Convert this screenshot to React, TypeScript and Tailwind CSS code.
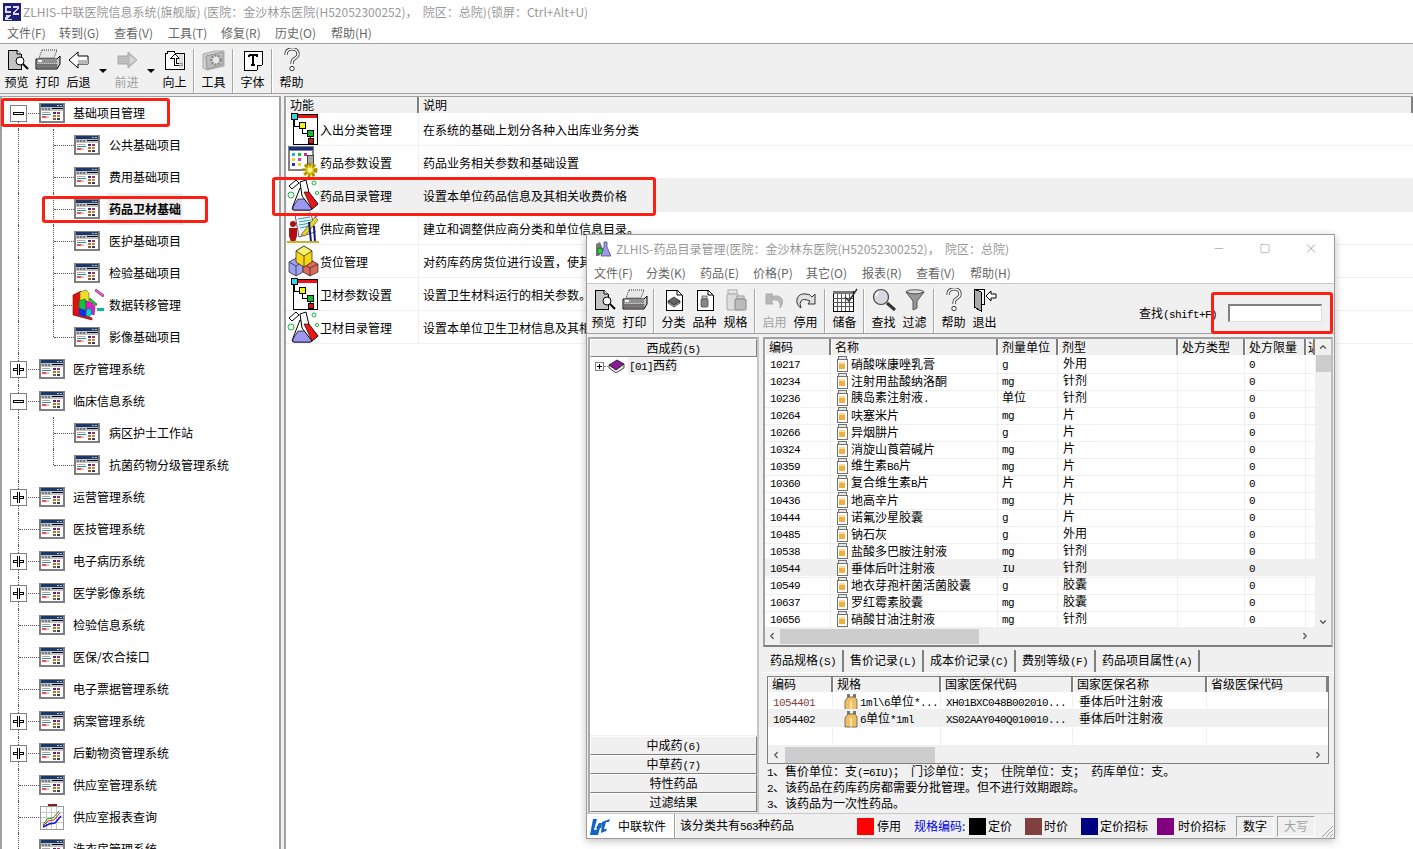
import { ChevronDown, ChevronLeft, ChevronRight, ChevronUp, Minus, Square, X } from "lucide-react";

type Ico = { className?: string };

// ---- drawn icons ----
function WinIcon() {
  return (
    <svg width="26" height="20" viewBox="0 0 26 20" shapeRendering="crispEdges" className="shrink-0">
      <rect width="26" height="20" fill="#808080" />
      <rect x="2" y="1" width="22" height="3" fill="#17396e" />
      <rect x="18" y="2" width="2" height="1" fill="#c0c0c0" />
      <rect x="21" y="2" width="2" height="1" fill="#c0c0c0" />
      <rect x="2" y="4" width="22" height="4" fill="#c0c0c0" />
      <rect x="3" y="5" width="2" height="2" fill="#777" />
      <rect x="6" y="5" width="2" height="2" fill="#777" />
      <rect x="9" y="5" width="2" height="2" fill="#777" />
      <rect x="13" y="5" width="11" height="1" fill="#000" />
      <rect x="2" y="8" width="22" height="10" fill="#fff" />
      <rect x="3" y="9" width="8" height="1" fill="#aaa" />
      <rect x="3" y="11" width="9" height="1" fill="#1b9aa8" />
      <rect x="3" y="13" width="4" height="2" fill="#f05050" />
      <rect x="7" y="13" width="3" height="2" fill="#f8b0b0" />
      <rect x="14" y="9" width="3" height="2" fill="#3b2d78" />
      <rect x="18" y="9" width="3" height="2" fill="#a03060" />
      <rect x="14" y="12" width="3" height="2" fill="#c07020" />
      <rect x="18" y="12" width="3" height="2" fill="#d08030" />
      <rect x="14" y="15" width="3" height="2" fill="#8a5a30" />
      <rect x="18" y="15" width="3" height="2" fill="#2c3a78" />
    </svg>
  );
}

function ChartIcon() {
  return (
    <svg width="26" height="26" viewBox="0 0 26 26" shapeRendering="crispEdges" className="shrink-0">
      <rect x="9" y="0" width="9" height="2" fill="#802020" />
      <rect x="1" y="2" width="24" height="24" fill="#9a9a9a" />
      <rect x="2" y="3" width="22" height="22" fill="#fff" />
      <path d="M2 8H24M2 13H24M2 18H24M7 3V25M12 3V25M17 3V25" stroke="#c8c8c8" fill="none" />
      <path d="M4 22L9 17L15 16L21 9" stroke="#e02020" fill="none" shapeRendering="auto" />
      <path d="M4 21L8 15L14 14L20 7" stroke="#10a010" fill="none" shapeRendering="auto" />
      <path d="M4 23L10 20L16 19L22 12" stroke="#1010e0" strokeWidth="1.4" fill="none" shapeRendering="auto" />
    </svg>
  );
}

function DataIcon() {
  return (
    <svg width="32" height="32" viewBox="0 0 32 32" className="-ml-[2px] -mr-[4px] shrink-0">
      <path d="M1 6L9 2L9 24L20 29L20 31L1 26Z" fill="#e01010" stroke="#700" strokeWidth=".6" />
      <path d="M8 3L14 1L17 4L17 14L8 12Z" fill="#ece020" stroke="#555" strokeWidth=".6" />
      <path d="M7 12L13 10L15 14L15 22L7 20Z" fill="#10c040" stroke="#060" strokeWidth=".6" />
      <path d="M14 12L20 14L23 18L22 26L14 22Z" fill="#e020c0" stroke="#606" strokeWidth=".6" />
      <path d="M7 19L14 21L14 28L7 26Z" fill="#1030e0" />
      <path d="M14 21L19 19L20 25L16 28L14 26Z" fill="#10c8d8" stroke="#066" strokeWidth=".6" />
      <path d="M24 0L32 6L31 8L23 2Z" fill="#e060d0" stroke="#404" strokeWidth=".5" />
      <path d="M18 9L25 15L24 17L17 11Z" fill="#30c040" stroke="#040" strokeWidth=".5" />
      <rect x="25" y="19" width="7" height="3" fill="#10b0b0" />
    </svg>
  );
}

function DocTreeIcon() {
  return (
    <svg width="32" height="32" viewBox="0 0 32 32" shapeRendering="crispEdges" className="shrink-0">
      <rect x="6" y="1" width="24" height="30" fill="#fff" stroke="#000" />
      <rect x="7" y="2" width="23" height="3" fill="#f01010" />
      <rect x="4" y="0" width="6" height="6" fill="#30d8e8" stroke="#000" />
      <path d="M7 6V13H12M15 15V20H20M23 25V22" stroke="#000" fill="none" />
      <rect x="12" y="9" width="6" height="6" fill="#f0f020" stroke="#000" />
      <rect x="20" y="17" width="6" height="6" fill="#10c030" stroke="#000" />
      <rect x="21" y="25" width="5" height="5" fill="#e01010" stroke="#000" />
    </svg>
  );
}

function ParamIcon() {
  return (
    <svg width="32" height="32" viewBox="0 0 32 32" className="shrink-0">
      <g shapeRendering="crispEdges">
        <rect x="1" y="0" width="26" height="25" fill="#808080" />
        <rect x="2" y="1" width="24" height="3" fill="#1a2a80" />
        <rect x="3" y="5" width="22" height="18" fill="#fff" />
        <rect x="5" y="7" width="3" height="3" fill="#18b8c8" />
        <rect x="11" y="7" width="3" height="3" fill="#10c040" />
        <rect x="17" y="7" width="3" height="3" fill="#e020a0" />
        <rect x="5" y="12" width="3" height="3" fill="#e8d820" />
        <rect x="11" y="12" width="3" height="3" fill="#d040c0" />
        <rect x="5" y="17" width="3" height="3" fill="#2030c0" />
        <rect x="11" y="17" width="3" height="3" fill="#e8d820" />
        <rect x="20" y="9" width="6" height="12" fill="#aaa" stroke="#444" />
      </g>
      <circle cx="23" cy="24" r="5.5" fill="#e8d020" stroke="#b09000" strokeWidth="4" strokeDasharray="2.4 1.6" />
      <circle cx="23" cy="24" r="2.4" fill="#f8f0a0" />
    </svg>
  );
}

function FlaskIcon() {
  return (
    <svg width="32" height="32" viewBox="0 0 32 32" className="shrink-0">
      <rect width="32" height="32" fill="#fff" />
      <path d="M13 9L17 13L25 28Q26 31 23 31H7Q4 31 6 27Z" fill="#fff" stroke="#000" />
      <path d="M11 20L20 20L25 29Q25 31 23 31H7Q5 31 6 28Z" fill="#9c98f0" stroke="#000" strokeWidth=".7" />
      <path d="M2 7L9 1L12 4L5 10Z" fill="#fff" stroke="#000" />
      <path d="M13 3L19 1L22 14L31 25L25 30L15 17Z" fill="#fff" stroke="#000" />
      <path d="M17 13L22 13L31 25L25 30Z" fill="#e81818" stroke="#000" strokeWidth=".6" />
      <circle cx="27" cy="4" r="2" fill="none" stroke="#10c030" />
      <circle cx="30" cy="14" r="1.6" fill="none" stroke="#10c030" />
      <circle cx="4" cy="16" r="3" fill="none" stroke="#10c030" />
    </svg>
  );
}

function SupplierIcon() {
  return (
    <svg width="32" height="32" viewBox="0 0 32 32" className="shrink-0">
      <path d="M8 3L24 1L28 20L12 25Z" fill="#eef4ff" stroke="#334" strokeWidth=".8" />
      <path d="M11 7L23 5M12 10L24 8M12 13L24 11M13 16L22 14" stroke="#30a0a0" />
      <circle cx="6" cy="12" r="3" fill="#b01010" />
      <path d="M2 16H10L10 24L8 30H4L2 24Z" fill="#b01010" />
      <path d="M14 23L28 5L31 8L18 24Z" fill="#e8d820" stroke="#333" strokeWidth=".6" />
      <circle cx="29" cy="3" r="2" fill="#d020c0" />
      <path d="M22 10L24 30M27 14L28 30" stroke="#101880" strokeWidth="2" />
      <rect x="0" y="29" width="32" height="2" fill="#c8b030" />
    </svg>
  );
}

function CubesIcon() {
  return (
    <svg width="32" height="32" viewBox="0 0 32 32" className="shrink-0">
      <path d="M2 17L9 13L16 17V27L9 31L2 27Z" fill="#9fa0f0" stroke="#222" strokeWidth=".7" />
      <path d="M9 21V31M2 17L9 21L16 17" stroke="#222" strokeWidth=".7" fill="none" />
      <path d="M16 19L24 15L31 19V27L23 31L16 27Z" fill="#e06858" stroke="#222" strokeWidth=".7" />
      <path d="M23 23V31M16 19L23 23L31 19" stroke="#222" strokeWidth=".7" fill="none" />
      <path d="M9 6L17 1L25 6V17L17 22L9 17Z" fill="#f8d818" stroke="#222" strokeWidth=".7" />
      <path d="M17 11V22" stroke="#222" strokeWidth=".7" />
      <path d="M9 6L17 11L25 6L17 1Z" fill="#f8f070" stroke="#222" strokeWidth=".7" />
    </svg>
  );
}

function BottleIcon() {
  return (
    <svg width="12" height="16" viewBox="0 0 12 16" shapeRendering="crispEdges" className="shrink-0">
      <rect x="2" y="0" width="8" height="3" fill="#e8e8e8" stroke="#707070" />
      <rect x="1" y="3" width="10" height="12" fill="#fff" stroke="#707070" />
      <rect x="3" y="6" width="6" height="7" fill="#f0b040" />
      <rect x="3" y="6" width="6" height="2" fill="#f8dc98" />
    </svg>
  );
}

function BottleOpenIcon() {
  return (
    <svg width="14" height="17" viewBox="0 0 14 17" className="shrink-0">
      <path d="M3 0H6V3H3ZM9 0H12V3H9Z" fill="#777" />
      <path d="M1 7L4 3H11L13 6V16H1Z" fill="#f0c060" stroke="#555" strokeWidth=".8" />
      <path d="M7 7V16" stroke="#fff" />
    </svg>
  );
}

function PreviewIcon() {
  return (
    <svg width="24" height="22" viewBox="0 0 24 22">
      <path d="M3 1H12L16 5V20H3Z" fill="#c4c4c4" stroke="#000" shapeRendering="crispEdges" />
      <path d="M12 1V5H16" fill="#fff" stroke="#000" />
      <circle cx="15" cy="12" r="4" fill="#fff" stroke="#000" />
      <path d="M18 15L23 20" stroke="#000" strokeWidth="2" />
    </svg>
  );
}

function PrintIcon() {
  return (
    <svg width="26" height="22" viewBox="0 0 26 22">
      <path d="M7 1H22L19 9H4Z" fill="#e8e8e8" stroke="#333" strokeDasharray="1 1" />
      <path d="M1 10H22L25 7V15L22 20H1Z" fill="#c8c8c8" stroke="#000" />
      <rect x="2" y="10" width="20" height="4" fill="#909090" />
      <rect x="2" y="15" width="20" height="4" fill="#777" stroke="#555" strokeWidth=".6" strokeDasharray="1 1" />
      <rect x="3" y="11" width="4" height="2" fill="#fff" />
    </svg>
  );
}

function BackIcon({ gray }: { gray?: boolean }) {
  return (
    <svg width="22" height="18" viewBox="0 0 22 18">
      <path d="M1 9L10 1V5H20V13H10V17Z" fill={gray ? "#c8c8c8" : "#fff"} stroke={gray ? "#a8a8a8" : "#000"} />
      <path d="M10 13V9H20V13Z" fill="#b8b8b8" />
    </svg>
  );
}

function ForwardIcon() {
  return (
    <svg width="22" height="18" viewBox="0 0 22 18">
      <path d="M21 9L12 1V5H2V13H12V17Z" fill="#bdbdbd" stroke="#a8a8a8" />
      <path d="M2 9H14V5L20 9L14 13V9Z" fill="#d8d8d8" />
    </svg>
  );
}

function UpFolderIcon() {
  return (
    <svg width="22" height="20" viewBox="0 0 22 20" shapeRendering="crispEdges">
      <path d="M3 1H10L11 3H20V19H1V3H3Z" fill="#fff" stroke="#000" />
      <path d="M10 15V8H7L11 4L15 8H12V13H18V15Z" fill="#fff" stroke="#000" />
      <rect x="15" y="4" width="4" height="14" fill="#d0d0d0" opacity=".7" />
    </svg>
  );
}

function ToolsIcon() {
  return (
    <svg width="24" height="22" viewBox="0 0 24 22">
      <path d="M1 5L13 2H22V17L5 21L1 19Z" fill="#d0d0d0" stroke="#aaa" />
      <path d="M4 7L21 3V16L5 20Z" fill="#bbb" stroke="#999" />
      <circle cx="14" cy="11" r="4.5" fill="#e8e8e8" stroke="#888" strokeWidth="2.4" strokeDasharray="2 1.2" />
    </svg>
  );
}

function FontIcon() {
  return (
    <svg width="20" height="21" viewBox="0 0 20 21" shapeRendering="crispEdges">
      <path d="M1 1H19V15L14 20H1Z" fill="#fff" stroke="#000" />
      <path d="M14 20V15H19" fill="#ddd" stroke="#000" />
      <path d="M6 5H14V7M10 5V15M8 15H12M6 5V7" stroke="#000" strokeWidth="1.4" fill="none" />
    </svg>
  );
}

function HelpIcon() {
  return (
    <svg width="16" height="24" viewBox="0 0 16 24">
      <path d="M2 7Q2 1 8 1Q14 1 14 6Q14 9 10 11Q8 12 8 16" fill="none" stroke="#333" strokeWidth="3.2" />
      <path d="M2 7Q2 1 8 1Q14 1 14 6Q14 9 10 11Q8 12 8 16" fill="none" stroke="#fff" strokeWidth="1.6" />
      <circle cx="8" cy="20.5" r="2.2" fill="#fff" stroke="#333" />
    </svg>
  );
}

function CategoryIcon() {
  return (
    <svg width="20" height="22" viewBox="0 0 20 22">
      <path d="M2 1H13L18 6V21H2Z" fill="#fff" stroke="#000" shapeRendering="crispEdges" />
      <path d="M13 1V6H18" fill="none" stroke="#000" />
      <path d="M4 12L10 8L16 12L10 16Z" fill="#666" stroke="#000" strokeWidth=".6" />
      <path d="M4 12V14L10 18L16 14V12L10 16Z" fill="#aaa" stroke="#000" strokeWidth=".6" />
    </svg>
  );
}

function VarietyIcon() {
  return (
    <svg width="20" height="22" viewBox="0 0 20 22">
      <path d="M2 1H13L18 6V21H2Z" fill="#fff" stroke="#000" shapeRendering="crispEdges" />
      <path d="M13 1V6H18" fill="none" stroke="#000" />
      <rect x="7" y="7" width="5" height="3" fill="#ccc" stroke="#444" strokeWidth=".7" />
      <rect x="6" y="10" width="7" height="8" rx="1" fill="#888" stroke="#444" strokeWidth=".7" />
    </svg>
  );
}

function SpecIcon() {
  return (
    <svg width="22" height="22" viewBox="0 0 22 22">
      <rect x="3" y="1" width="9" height="4" fill="#e8e8e8" stroke="#aaa" />
      <rect x="2" y="5" width="11" height="16" rx="1" fill="#dcdcdc" stroke="#aaa" />
      <rect x="12" y="7" width="7" height="3" fill="#d8d8d8" stroke="#999" />
      <rect x="10" y="10" width="11" height="11" rx="1" fill="#bbb" stroke="#888" />
    </svg>
  );
}

function UndoIcon() {
  return (
    <svg width="22" height="18" viewBox="0 0 22 18">
      <path d="M2 3L9 3L7 6Q15 3 18 8Q20 12 16 17Q17 11 13 9Q10 8 7 10L9 13L2 13Z" fill="#b8b8b8" stroke="#aaa" />
    </svg>
  );
}

function RedoIcon() {
  return (
    <svg width="22" height="18" viewBox="0 0 22 18">
      <path d="M20 13L13 13L15 10Q8 7 6 10Q4 12 6 17Q1 14 2 8Q4 2 11 3Q15 3 17 6L20 3Z" fill="#e0e0e0" stroke="#333" />
    </svg>
  );
}

function StockIcon() {
  return (
    <svg width="26" height="24" viewBox="0 0 26 24" shapeRendering="crispEdges">
      <rect x="1" y="3" width="20" height="20" fill="#fff" stroke="#000" />
      <rect x="1" y="3" width="20" height="3" fill="#777" />
      <path d="M5 6V23M9 6V23M13 6V23M17 6V23M1 10H21M1 14H21M1 18H21" stroke="#555" fill="none" />
      <path d="M13 9L17 13L25 1" stroke="#333" strokeWidth="1.5" fill="none" shapeRendering="auto" />
    </svg>
  );
}

function SearchIcon() {
  return (
    <svg width="24" height="24" viewBox="0 0 24 24">
      <circle cx="9" cy="9" r="7.5" fill="#d8d8e0" stroke="#444" strokeWidth="1.2" />
      <path d="M7 4Q4 5 4 8" stroke="#fff" strokeWidth="1.5" fill="none" />
      <path d="M15 15L23 22" stroke="#333" strokeWidth="3" />
    </svg>
  );
}

function FunnelIcon() {
  return (
    <svg width="20" height="22" viewBox="0 0 20 22">
      <ellipse cx="10" cy="3" rx="9" ry="2.2" fill="#ddd" stroke="#555" />
      <path d="M1 3L8 12V21L12 19V12L19 3Q10 7 1 3Z" fill="#999" stroke="#555" />
    </svg>
  );
}

function ExitIcon() {
  return (
    <svg width="24" height="24" viewBox="0 0 24 24" shapeRendering="crispEdges">
      <path d="M1 1H11V16H8" fill="none" stroke="#000" />
      <path d="M1 1L8 4V23L1 19Z" fill="#aaa" stroke="#000" />
      <path d="M13 8L18 3V6H23V10H18V13Z" fill="#fff" stroke="#000" shapeRendering="auto" />
    </svg>
  );
}

function SmallFlask() {
  return (
    <svg width="16" height="16" viewBox="0 0 16 16" className="shrink-0">
      <path d="M1 3L5 1L8 8L4 15H1Z" fill="#777" />
      <circle cx="5" cy="10" r="3" fill="#20d040" stroke="#333" strokeWidth=".6" />
      <path d="M9 1H12V6L16 15H6L9 6Z" fill="#9c98f0" stroke="#444" strokeWidth=".7" />
    </svg>
  );
}

function BookIcon() {
  return (
    <svg width="17" height="14" viewBox="0 0 17 14" className="shrink-0">
      <path d="M1 6L9 1L16 5L8 11Z" fill="#8a1a9a" stroke="#000" strokeWidth=".7" />
      <path d="M1 6V9L8 14L16 9V5L8 11Z" fill="#e8e8e8" stroke="#000" strokeWidth=".7" />
    </svg>
  );
}

function AppLogo() {
  return (
    <svg width="18" height="18" viewBox="0 0 18 18" shapeRendering="crispEdges" className="shrink-0">
      <rect width="18" height="18" fill="#20207a" />
      <path d="M2 3H8V5H4V8H8V10H2ZM10 3H16V5L12 10H16V12H10V10L14 5H10ZM3 12H8L5 16H9V17H2Z" fill="#fff" opacity=".85" />
    </svg>
  );
}

function ZlLogo() {
  return (
    <svg width="22" height="20" viewBox="0 0 22 20" className="shrink-0">
      <path d="M4 3H8L5 14H8L7 19H1Z" fill="#1464c8" />
      <path d="M10 7H13L12 12H11L9 19H6L8 12H7Z" fill="#1464c8" />
      <path d="M13 6L21 3L20 6H17L15 13H18L17 15L12 17Z" fill="#1464c8" />
    </svg>
  );
}

// ---- shared pieces ----

// ASCII in the old grids is half-width bitmap text, so it gets its own run
function Mix({ text }: { text: string }) {
  return (
    <>
      {text.split(/([\x00-\x7f]+)/).map((part, i) =>
        /^[\x00-\x7f]+$/.test(part) ? (
          <span key={i} className="font-['Liberation_Mono'] text-[11px] tracking-[-0.6px]">
            {part}
          </span>
        ) : (
          <span key={i}>{part}</span>
        )
      )}
    </>
  );
}

function ToolBtn({ icon, label, off }: { icon: React.ReactNode; label: string; off?: boolean }) {
  return (
    <div className="flex w-[31px] shrink-0 flex-col items-center">
      <div className="flex h-[22px] items-center justify-center">{icon}</div>
      <span className={`mt-[3px] whitespace-nowrap text-[12px] leading-[16px] ${off ? "text-[#a0a0a0]" : "text-black"}`}>
        {label}
      </span>
    </div>
  );
}

function Sep() {
  return <div className="mx-[3px] h-[44px] w-[2px] shrink-0 border-l border-r border-l-[#a8a8a8] border-r-white" />;
}

function Drop() {
  return (
    <div className="flex h-[38px] w-[17px] shrink-0 items-end justify-center pb-[14px]">
      <div className="h-0 w-0 border-x-[4px] border-t-[4px] border-x-transparent border-t-black" />
    </div>
  );
}

function HeadCell({ children, className = "" }: { children: React.ReactNode; className?: string }) {
  return (
    <div
      className={`truncate border-l border-r-2 border-l-white border-r-[#808080] bg-[#f0f0f0] pl-[3px] text-[12px] leading-[15px] text-black ${className}`}
    >
      {children}
    </div>
  );
}

function RaisedBtn({ label }: { label: string }) {
  return (
    <div className="h-[19px] border border-t-white border-l-white border-r-[#808080] border-b-[#808080] bg-[#f0f0f0] text-center text-[12px] leading-[15px]">
      <Mix text={label} />
    </div>
  );
}

function RedBox({ className }: Ico) {
  return <div className={`pointer-events-none absolute rounded-[3px] border-[3px] border-[#fb1f14] ${className}`} />;
}

// ---- data ----
const menus = [
  { t: "文件(F)", w: "w-[52px]" },
  { t: "转到(G)", w: "w-[55px]" },
  { t: "查看(V)", w: "w-[54px]" },
  { t: "工具(T)", w: "w-[53px]" },
  { t: "修复(R)", w: "w-[54px]" },
  { t: "历史(O)", w: "w-[56px]" },
  { t: "帮助(H)", w: "w-[50px]" },
];

const subMenus = [
  { t: "文件(F)", w: "w-[52px]" },
  { t: "分类(K)", w: "w-[54px]" },
  { t: "药品(E)", w: "w-[53px]" },
  { t: "价格(P)", w: "w-[53px]" },
  { t: "其它(O)", w: "w-[56px]" },
  { t: "报表(R)", w: "w-[54px]" },
  { t: "查看(V)", w: "w-[54px]" },
  { t: "帮助(H)", w: "w-[50px]" },
];

type TreeRow = {
  label: string;
  level: 0 | 1;
  toggle?: "plus" | "minus";
  icon?: "chart" | "data";
  selected?: boolean;
  last?: boolean;
  first?: boolean;
};

const tree: TreeRow[] = [
  { label: "基础项目管理", level: 0, toggle: "minus", first: true },
  { label: "公共基础项目", level: 1 },
  { label: "费用基础项目", level: 1 },
  { label: "药品卫材基础", level: 1, selected: true },
  { label: "医护基础项目", level: 1 },
  { label: "检验基础项目", level: 1 },
  { label: "数据转移管理", level: 1, icon: "data" },
  { label: "影像基础项目", level: 1, last: true },
  { label: "医疗管理系统", level: 0, toggle: "plus" },
  { label: "临床信息系统", level: 0, toggle: "minus" },
  { label: "病区护士工作站", level: 1 },
  { label: "抗菌药物分级管理系统", level: 1, last: true },
  { label: "运营管理系统", level: 0, toggle: "plus" },
  { label: "医技管理系统", level: 0 },
  { label: "电子病历系统", level: 0, toggle: "plus" },
  { label: "医学影像系统", level: 0, toggle: "plus" },
  { label: "检验信息系统", level: 0 },
  { label: "医保/农合接口", level: 0 },
  { label: "电子票据管理系统", level: 0 },
  { label: "病案管理系统", level: 0, toggle: "plus" },
  { label: "后勤物资管理系统", level: 0, toggle: "plus" },
  { label: "供应室管理系统", level: 0 },
  { label: "供应室报表查询", level: 0, icon: "chart" },
  { label: "洗衣房管理系统", level: 0 },
];

const funcs = [
  { icon: <DocTreeIcon />, name: "入出分类管理", desc: "在系统的基础上划分各种入出库业务分类" },
  { icon: <ParamIcon />, name: "药品参数设置", desc: "药品业务相关参数和基础设置" },
  { icon: <FlaskIcon />, name: "药品目录管理", desc: "设置本单位药品信息及其相关收费价格", active: true },
  { icon: <SupplierIcon />, name: "供应商管理", desc: "建立和调整供应商分类和单位信息目录。" },
  { icon: <CubesIcon />, name: "货位管理", desc: "对药库药房货位进行设置，使其与实际存放货位一致" },
  { icon: <DocTreeIcon />, name: "卫材参数设置", desc: "设置卫生材料运行的相关参数。" },
  { icon: <FlaskIcon />, name: "卫材目录管理", desc: "设置本单位卫生卫材信息及其相关收费价格" },
];

const drugs = [
  ["10217", "硝酸咪康唑乳膏", "g", "外用"],
  ["10234", "注射用盐酸纳洛酮", "mg", "针剂"],
  ["10236", "胰岛素注射液.", "单位", "针剂"],
  ["10264", "呋塞米片", "mg", "片"],
  ["10266", "异烟肼片", "g", "片"],
  ["10324", "消旋山莨菪碱片", "mg", "片"],
  ["10359", "维生素B6片", "mg", "片"],
  ["10360", "复合维生素B片", "片", "片"],
  ["10436", "地高辛片", "mg", "片"],
  ["10444", "诺氟沙星胶囊", "g", "片"],
  ["10485", "钠石灰", "g", "外用"],
  ["10538", "盐酸多巴胺注射液", "mg", "针剂"],
  ["10544", "垂体后叶注射液", "IU", "针剂"],
  ["10549", "地衣芽孢杆菌活菌胶囊", "g", "胶囊"],
  ["10637", "罗红霉素胶囊", "mg", "胶囊"],
  ["10656", "硝酸甘油注射液", "mg", "针剂"],
];

const tabs = [
  { t: "药品规格(S)", w: "w-[80px]", active: true },
  { t: "售价记录(L)", w: "w-[80px]" },
  { t: "成本价记录(C)", w: "w-[92px]" },
  { t: "费别等级(F)", w: "w-[80px]" },
  { t: "药品项目属性(A)", w: "w-[104px]" },
];

const gridCols = "grid grid-cols-[66px_167px_60px_120px_67px_61px_9px]";
const subCols = "grid grid-cols-[65px_108px_132px_134px_121px]";
const subHead = "!overflow-visible !leading-[14px]";

function TreeLine({ row }: { row: TreeRow }) {
  return (
    <div className={`relative flex h-8 shrink-0 items-center ${row.level === 0 ? "pl-[39px]" : "pl-[74px]"}`}>
      {/* dotted connectors */}
      <span
        className={`absolute left-[18px] w-0 border-l border-dotted border-[#555] ${row.first ? "top-[16px] bottom-0" : "top-0 bottom-0"}`}
      />
      {row.level === 1 && (
        <>
          <span className={`absolute left-[53px] top-0 w-0 border-l border-dotted border-[#555] ${row.last ? "h-[16px]" : "h-8"}`} />
          <span className="absolute left-[54px] top-[16px] h-0 w-[20px] border-t border-dotted border-[#555]" />
        </>
      )}
      {row.level === 0 && <span className="absolute left-[19px] top-[16px] h-0 w-[20px] border-t border-dotted border-[#555]" />}
      {row.toggle && (
        <span className="absolute left-[10px] top-[8px] flex h-[17px] w-[17px] items-center justify-center border border-[#808080] bg-white">
          <span className="h-[3px] w-[11px] border border-black bg-white" />
          {row.toggle === "plus" && <span className="absolute h-[11px] w-[3px] border-x border-black bg-white" />}
        </span>
      )}
      <span className="relative shrink-0 bg-white">
        {row.icon === "data" ? <DataIcon /> : row.icon === "chart" ? <ChartIcon /> : <WinIcon />}
      </span>
      <span
        className={`flex h-8 items-center whitespace-nowrap px-[2px] text-[12px] text-black ${
          row.level === 1 ? "ml-[7px]" : "ml-[6px]"
        } ${row.selected ? "bg-[#f0f0f0] font-bold" : ""}`}
      >
        {row.label}
      </span>
    </div>
  );
}

function DrugWindow() {
  return (
    <div className="absolute left-[586px] top-[234px] flex h-[605px] w-[749px] flex-col border border-[#9c9c9c] bg-[#f0f0f0] shadow-[0_2px_8px_rgba(0,0,0,0.25)]">
      {/* title */}
      <div className="flex h-[27px] shrink-0 items-center bg-white pl-[8px]">
        <SmallFlask />
        <span className="ml-[5px] whitespace-nowrap text-[12px] text-[#999]">
          ZLHIS-药品目录管理(医院：金沙林东医院(H52052300252)，&nbsp;&nbsp;院区：总院)
        </span>
        <div className="ml-auto flex items-center text-[#777]">
          <Minus className="h-[13px] w-[46px]" strokeWidth={1} />
          <Square className="h-[11px] w-[46px]" strokeWidth={1} />
          <X className="h-[15px] w-[46px]" strokeWidth={1} />
        </div>
      </div>
      {/* menu */}
      <div className="flex h-[21px] shrink-0 items-center bg-white pl-[7px]">
        {subMenus.map((m) => (
          <span key={m.t} className={`${m.w} whitespace-nowrap text-[12px] text-[#666]`}>
            {m.t}
          </span>
        ))}
      </div>
      {/* toolbar */}
      <div className="flex h-[51px] shrink-0 items-start border-y border-t-[#c8c8c8] border-b-[#a0a0a0] bg-[#f0f0f0] pl-[1px] pt-[5px]">
        <ToolBtn icon={<PreviewIcon />} label="预览" />
        <ToolBtn icon={<PrintIcon />} label="打印" />
        <Sep />
        <ToolBtn icon={<CategoryIcon />} label="分类" />
        <ToolBtn icon={<VarietyIcon />} label="品种" />
        <ToolBtn icon={<SpecIcon />} label="规格" />
        <Sep />
        <ToolBtn icon={<UndoIcon />} label="启用" off />
        <ToolBtn icon={<RedoIcon />} label="停用" />
        <Sep />
        <ToolBtn icon={<StockIcon />} label="储备" />
        <Sep />
        <ToolBtn icon={<SearchIcon />} label="查找" />
        <ToolBtn icon={<FunnelIcon />} label="过滤" />
        <Sep />
        <ToolBtn icon={<HelpIcon />} label="帮助" />
        <ToolBtn icon={<ExitIcon />} label="退出" />
        <div className="ml-auto mr-[12px] mt-[13px] flex items-center">
          <span className="mt-[2px] whitespace-nowrap text-[12px] text-black">
            <Mix text="查找(shift+F)" />
          </span>
          <div className="ml-[11px] h-[18px] w-[94px] border border-t-2 border-l-2 border-t-[#808080] border-l-[#808080] border-r-[#e0e0e0] border-b-[#e0e0e0] bg-white" />
        </div>
      </div>
      {/* body */}
      <div className="flex h-[479px] shrink-0 pt-[3px]">
        {/* left category panel */}
        <div className="ml-[1px] flex h-[476px] w-[171px] shrink-0 flex-col border-2 border-[#a8a8a8] border-b-0 border-r-[#c8c8c8]">
          <div className="h-[18px] shrink-0 border border-t-white border-l-white border-r-[#808080] border-b-[#808080] bg-[#f0f0f0] text-center text-[12px] leading-[15px]">
            <Mix text="西成药(5)" />
          </div>
          <div className="relative flex-1 bg-white">
            <div className="flex h-[18px] items-center pl-[5px]">
              <span className="relative flex h-[9px] w-[9px] items-center justify-center border border-[#808080] bg-white">
                <span className="h-px w-[5px] bg-black" />
                <span className="absolute h-[5px] w-px bg-black" />
              </span>
              <span className="w-[4px] border-t border-dotted border-[#777]" />
              <BookIcon />
              <span className="ml-[3px] whitespace-nowrap bg-[#f0f0f0] px-[1px] text-[12px] leading-[16px]">
                <Mix text="[01]西药" />
              </span>
            </div>
          </div>
          <div className="flex shrink-0 flex-col bg-[#f0f0f0] pb-[1px] pt-px">
            <RaisedBtn label="中成药(6)" />
            <RaisedBtn label="中草药(7)" />
            <RaisedBtn label="特性药品" />
            <RaisedBtn label="过滤结果" />
          </div>
        </div>
        {/* right side */}
        <div className="ml-[3px] flex w-[572px] shrink-0 flex-col">
          <div className="ml-px flex h-[310px] w-[570px] shrink-0 flex-col border-2 border-[#a0a0a0] border-r-[#bdbdbd] border-b-[#808080] bg-[#f0f0f0]">
            <div className="flex flex-1">
              <div className="w-[550px] shrink-0">
                <div className={`${gridCols} h-[16px]`}>
                  <HeadCell>编码</HeadCell>
                  <HeadCell>名称</HeadCell>
                  <HeadCell>剂量单位</HeadCell>
                  <HeadCell>剂型</HeadCell>
                  <HeadCell>处方类型</HeadCell>
                  <HeadCell>处方限量</HeadCell>
                  <HeadCell className="!pl-[1px]">近</HeadCell>
                </div>
                {drugs.map((d) => (
                  <div
                    key={d[0]}
                    className={`${gridCols} h-[17px] text-[12px] leading-[15px] ${d[0] === "10544" ? "bg-[#f0f0f0]" : "bg-white"}`}
                  >
                    <div className="border-b border-r border-[#f0f0f0] pl-[5px]">
                      <Mix text={d[0]} />
                    </div>
                    <div className="flex items-center overflow-hidden whitespace-nowrap border-b border-r border-[#f0f0f0] pl-[5px]">
                      <BottleIcon />
                      <span className="ml-[3px] -mt-px">
                        <Mix text={d[1]} />
                      </span>
                    </div>
                    <div className="border-b border-r border-[#f0f0f0] pl-[4px]">
                      <Mix text={d[2]} />
                    </div>
                    <div className="border-b border-r border-[#f0f0f0] pl-[5px] leading-[16px]">{d[3]}</div>
                    <div className="border-b border-r border-[#f0f0f0]" />
                    <div className="border-b border-r border-[#f0f0f0] pl-[4px]">
                      <Mix text="0" />
                    </div>
                    <div className="border-b border-[#f0f0f0]" />
                  </div>
                ))}
              </div>
              <div className="flex w-[16px] shrink-0 flex-col items-center bg-[#f0f0f0]">
                <ChevronUp className="my-[3px] h-[10px] w-[10px] text-[#555]" strokeWidth={3} />
                <div className="h-[17px] w-[15px] bg-[#cdcdcd]" />
                <ChevronDown className="mt-auto h-[10px] w-[10px] text-[#555]" strokeWidth={3} />
              </div>
            </div>
            <div className="flex h-[18px] shrink-0 items-center bg-[#f0f0f0] pr-[21px]">
              <ChevronLeft className="ml-[2px] h-[10px] w-[10px] text-[#555]" strokeWidth={3} />
              <div className="ml-[3px] h-[15px] w-[199px] bg-[#cdcdcd]" />
              <ChevronRight className="ml-auto h-[10px] w-[10px] text-[#555]" strokeWidth={3} />
            </div>
          </div>
          {/* tabs */}
          <div className="mt-[2px] flex h-[24px] shrink-0 items-end border-b border-white pl-[2px]">
            {tabs.map((t) => (
              <div
                key={t.t}
                className={`${t.w} h-[22px] shrink-0 whitespace-nowrap border-r-2 border-r-[#808080] pl-[6px] text-[12px] leading-[20px]`}
              >
                <Mix text={t.t} />
              </div>
            ))}
          </div>
          {/* specs grid */}
          <div className="ml-[5px] mt-[3px] flex h-[88px] w-[562px] shrink-0 flex-col border border-[#808080] bg-white">
            <div className={`${subCols} h-[15px] shrink-0`}>
              <HeadCell className={subHead}>编码</HeadCell>
              <HeadCell className={subHead}>规格</HeadCell>
              <HeadCell className={subHead}>国家医保代码</HeadCell>
              <HeadCell className={subHead}>国家医保名称</HeadCell>
              <HeadCell className={subHead}>省级医保代码</HeadCell>
            </div>
            <div className={`${subCols} h-[17px] shrink-0 text-[12px] leading-[17px]`}>
              <div className="border-r border-b border-[#f0f0f0] pl-[5px] text-[#7f3f3f]">
                <Mix text="1054401" />
              </div>
              <div className="flex items-center whitespace-nowrap border-r border-b border-[#f0f0f0] pl-[11px]">
                <BottleOpenIcon />
                <span className="ml-[2px]">
                  <Mix text="1ml\6单位*..." />
                </span>
              </div>
              <div className="border-r border-b border-[#f0f0f0] pl-[5px]">
                <Mix text="XH01BXC048B002010..." />
              </div>
              <div className="border-r border-b border-[#f0f0f0] pl-[6px]">垂体后叶注射液</div>
              <div className="border-b border-[#f0f0f0]" />
            </div>
            <div className={`${subCols} h-[18px] shrink-0 bg-[#f0f0f0] text-[12px] leading-[17px]`}>
              <div className="pl-[5px]">
                <Mix text="1054402" />
              </div>
              <div className="flex items-center whitespace-nowrap pl-[11px]">
                <BottleOpenIcon />
                <span className="ml-[2px]">
                  <Mix text="6单位*1ml" />
                </span>
              </div>
              <div className="pl-[5px]">
                <Mix text="XS02AAY040Q010010..." />
              </div>
              <div className="pl-[6px]">垂体后叶注射液</div>
              <div />
            </div>
            <div className={`${subCols} h-[19px] shrink-0`}>
              <div className="border-r border-b border-[#f0f0f0]" />
              <div className="border-r border-b border-[#f0f0f0]" />
              <div className="border-r border-b border-[#f0f0f0]" />
              <div className="border-r border-b border-[#f0f0f0]" />
              <div className="border-b border-[#f0f0f0]" />
            </div>
            <div className="flex h-[17px] shrink-0 items-center bg-[#f0f0f0] pr-[5px]">
              <ChevronLeft className="ml-[3px] h-[10px] w-[10px] text-[#555]" strokeWidth={3} />
              <div className="ml-[4px] h-[16px] w-[150px] bg-[#cdcdcd]" />
              <ChevronRight className="ml-auto h-[10px] w-[10px] text-[#555]" strokeWidth={3} />
            </div>
          </div>
          {/* notes */}
          <div className="-mt-px ml-[5px] whitespace-pre text-[12px] leading-[16px] text-black">
            <div className="h-[16px]">
              <Mix text="1、售价单位：支(=6IU)； 门诊单位：支； 住院单位：支； 药库单位：支。" />
            </div>
            <div className="h-[16px]">
              <Mix text="2、该药品在药库药房都需要分批管理。但不进行效期跟踪。" />
            </div>
            <div className="h-[16px]">
              <Mix text="3、该药品为一次性药品。" />
            </div>
          </div>
        </div>
      </div>
      {/* status bar */}
      <div className="flex h-[25px] shrink-0 items-center border-t border-[#c8c8c8] bg-[#f0f0f0] text-[12px]">
        <div className="flex h-[24px] w-[88px] shrink-0 items-center border-r border-r-[#a0a0a0] bg-white pl-[2px]">
          <ZlLogo />
          <span className="ml-[7px] whitespace-nowrap">中联软件</span>
        </div>
        <div className="flex h-[24px] w-[182px] shrink-0 items-center border-l border-white pl-[4px]">
          <span className="whitespace-pre">
            <Mix text="该分类共有563种药品" />
          </span>
        </div>
        <span className="h-[17px] w-[17px] shrink-0 bg-[#ff0000]" />
        <span className="ml-[3px] whitespace-nowrap">停用</span>
        <span className="ml-[13px] w-[54px] shrink-0 whitespace-nowrap text-[#0000e0]">规格编码:</span>
        <span className="ml-[1px] h-[17px] w-[17px] shrink-0 bg-black" />
        <span className="ml-[2px] whitespace-nowrap">定价</span>
        <span className="ml-[13px] h-[17px] w-[17px] shrink-0 bg-[#804040]" />
        <span className="ml-[2px] whitespace-nowrap">时价</span>
        <span className="ml-[13px] h-[17px] w-[17px] shrink-0 bg-[#000080]" />
        <span className="ml-[2px] whitespace-nowrap">定价招标</span>
        <span className="ml-[9px] h-[17px] w-[17px] shrink-0 bg-[#800080]" />
        <span className="ml-[4px] whitespace-nowrap">时价招标</span>
        <span className="ml-[10px] flex h-[21px] w-[38px] shrink-0 items-center justify-center border border-t-[#a0a0a0] border-l-[#a0a0a0] border-r-white border-b-white">
          数字
        </span>
        <span className="ml-[3px] flex h-[21px] w-[38px] shrink-0 items-center justify-center border border-t-[#a0a0a0] border-l-[#a0a0a0] border-r-white border-b-white text-[#a0a0a0]">
          大写
        </span>
        <svg width="14" height="14" viewBox="0 0 14 14" className="ml-auto mt-auto shrink-0">
          <path d="M13 2L2 13M13 6L6 13M13 10L10 13" stroke="#a0a0a0" />
        </svg>
      </div>
    </div>
  );
}

export default function App() {
  return (
    <div className="relative h-[849px] w-[1413px] overflow-hidden bg-[#f0f0f0] [font-family:'Noto_Sans_CJK_SC','Noto_Sans',sans-serif]">
      {/* title bar */}
      <div className="flex h-[24px] items-center bg-white pl-[3px]">
        <AppLogo />
        <span className="ml-[2px] whitespace-nowrap text-[12px] text-[#999]">
          ZLHIS-中联医院信息系统(旗舰版) (医院：金沙林东医院(H52052300252)，&nbsp;&nbsp;院区：总院)(锁屏：Ctrl+Alt+U)
        </span>
      </div>
      {/* menu */}
      <div className="flex h-[19px] items-center bg-white pb-[2px] pl-[7px]">
        {menus.map((m) => (
          <span key={m.t} className={`${m.w} whitespace-nowrap text-[12px] text-[#666]`}>
            {m.t}
          </span>
        ))}
      </div>
      {/* toolbar */}
      <div className="flex h-[51px] items-start border-y border-y-[#a0a0a0] bg-[#f0f0f0] pl-[1px] pt-[5px]">
        <ToolBtn icon={<PreviewIcon />} label="预览" />
        <ToolBtn icon={<PrintIcon />} label="打印" />
        <ToolBtn icon={<BackIcon />} label="后退" />
        <Drop />
        <ToolBtn icon={<ForwardIcon />} label="前进" off />
        <Drop />
        <ToolBtn icon={<UpFolderIcon />} label="向上" />
        <Sep />
        <ToolBtn icon={<ToolsIcon />} label="工具" />
        <Sep />
        <ToolBtn icon={<FontIcon />} label="字体" />
        <Sep />
        <ToolBtn icon={<HelpIcon />} label="帮助" />
      </div>
      {/* body */}
      <div className="mt-[2px] flex h-[753px]">
        {/* navigation tree */}
        <div className="flex h-full w-[281px] shrink-0 flex-col overflow-hidden border-l-2 border-r-2 border-t border-[#a0a0a0] bg-white">
          <div className="-ml-[2px] flex flex-col">
            {tree.map((row) => (
              <TreeLine key={row.label} row={row} />
            ))}
          </div>
        </div>
        <div className="w-[3px] shrink-0 bg-[#f0f0f0]" />
        {/* function list */}
        <div className="flex min-w-0 flex-1 flex-col border-l-2 border-t border-[#a0a0a0] bg-white">
          <div className="flex h-[16px] shrink-0">
            <HeadCell className="w-[133px] shrink-0">功能</HeadCell>
            <HeadCell className="flex-1">说明</HeadCell>
          </div>
          {funcs.map((f) => (
            <div
              key={f.name}
              className={`flex h-[33px] shrink-0 items-center border-b border-[#f0f0f0] text-[12px] text-black ${f.active ? "bg-[#f0f0f0]" : "bg-white"}`}
            >
              <div className="flex h-full w-[133px] shrink-0 items-center border-r border-[#f0f0f0] pl-[1px]">
                {f.icon}
                <span className="ml-[1px] mt-[2px] whitespace-nowrap">{f.name}</span>
              </div>
              <span className="mt-[2px] whitespace-nowrap pl-[4px]">{f.desc}</span>
            </div>
          ))}
        </div>
      </div>

      <DrugWindow />

      {/* red annotations on the screenshot */}
      <RedBox className="left-[1px] top-[98px] h-[29px] w-[169px]" />
      <RedBox className="left-[42px] top-[196px] h-[27px] w-[166px]" />
      <RedBox className="left-[272px] top-[177px] h-[39px] w-[384px]" />
      <RedBox className="left-[1211px] top-[292px] h-[42px] w-[122px]" />
    </div>
  );
}
